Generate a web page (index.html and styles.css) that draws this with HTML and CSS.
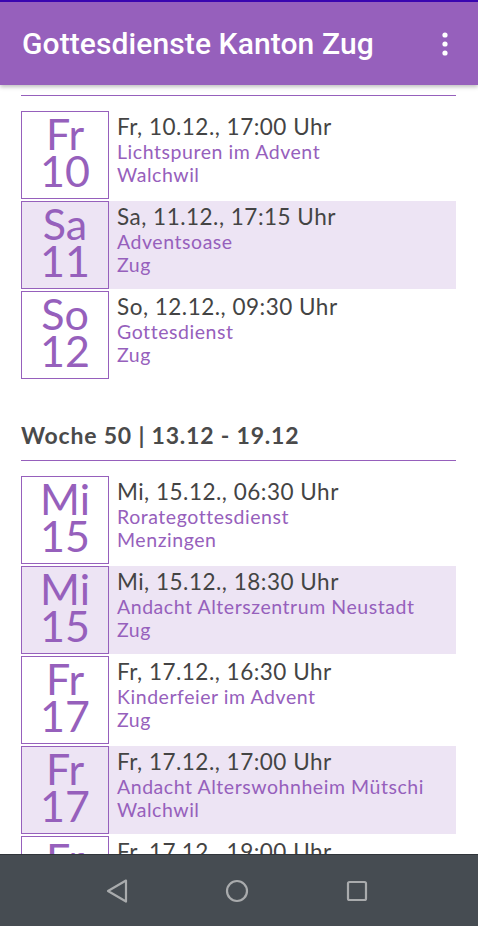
FILE: index.html
```html
<!DOCTYPE html>
<html lang="de">
<head>
<meta charset="utf-8">
<link rel="stylesheet" href="styles.css">
</head>
<body>
<div class="phone">
  <header class="appbar">
    <div class="statusline"></div>
    <div class="appbar-row">
      <h1 class="title">Gottesdienste Kanton Zug</h1>
      <svg class="menu" width="10" height="26" viewBox="0 0 10 26"><circle cx="5" cy="4" r="2.6" fill="#fff"/><circle cx="5" cy="13" r="2.6" fill="#fff"/><circle cx="5" cy="22" r="2.6" fill="#fff"/></svg>
    </div>
  </header>
  <main class="list">
    <div class="scroll">
      <section class="week">
        <h2 class="week-title">Woche 49 | 06.12 - 12.12</h2>
        <div class="event">
          <div class="day"><span>Fr</span><span>10</span></div>
          <div class="info"><div class="time">Fr, 10.12., 17:00 Uhr</div><div class="name">Lichtspuren im Advent</div><div class="place">Walchwil</div></div>
        </div>
        <div class="event shaded">
          <div class="day"><span>Sa</span><span>11</span></div>
          <div class="info"><div class="time">Sa, 11.12., 17:15 Uhr</div><div class="name">Adventsoase</div><div class="place">Zug</div></div>
        </div>
        <div class="event">
          <div class="day"><span>So</span><span>12</span></div>
          <div class="info"><div class="time">So, 12.12., 09:30 Uhr</div><div class="name">Gottesdienst</div><div class="place">Zug</div></div>
        </div>
      </section>
      <section class="week">
        <h2 class="week-title">Woche 50 | 13.12 - 19.12</h2>
        <div class="event">
          <div class="day"><span>Mi</span><span>15</span></div>
          <div class="info"><div class="time">Mi, 15.12., 06:30 Uhr</div><div class="name">Rorategottesdienst</div><div class="place">Menzingen</div></div>
        </div>
        <div class="event shaded">
          <div class="day"><span>Mi</span><span>15</span></div>
          <div class="info"><div class="time">Mi, 15.12., 18:30 Uhr</div><div class="name">Andacht Alterszentrum Neustadt</div><div class="place">Zug</div></div>
        </div>
        <div class="event">
          <div class="day"><span>Fr</span><span>17</span></div>
          <div class="info"><div class="time">Fr, 17.12., 16:30 Uhr</div><div class="name">Kinderfeier im Advent</div><div class="place">Zug</div></div>
        </div>
        <div class="event shaded">
          <div class="day"><span>Fr</span><span>17</span></div>
          <div class="info"><div class="time">Fr, 17.12., 17:00 Uhr</div><div class="name">Andacht Alterswohnheim Mütschi</div><div class="place">Walchwil</div></div>
        </div>
        <div class="event">
          <div class="day"><span>Fr</span><span>17</span></div>
          <div class="info"><div class="time">Fr, 17.12., 19:00 Uhr</div><div class="name">Adventskonzert</div><div class="place">Zug</div></div>
        </div>
      </section>
    </div>
  </main>
  <nav class="navbar">
    <svg width="24" height="26" viewBox="0 0 24 26"><path d="M21 2.5 L3 13 L21 23.5 Z" fill="none" stroke="#a9abad" stroke-width="2.2" stroke-linejoin="round"/></svg>
    <svg width="26" height="26" viewBox="0 0 26 26"><circle cx="13" cy="13" r="10" fill="none" stroke="#a9abad" stroke-width="2.2"/></svg>
    <svg width="24" height="24" viewBox="0 0 24 24"><rect x="3" y="3" width="18" height="18" rx="1.5" fill="none" stroke="#a9abad" stroke-width="2.2"/></svg>
  </nav>
</div>
</body>
</html>
```

FILE: styles.css
```css
* { box-sizing: border-box; }
html, body { margin: 0; padding: 0; }
body { width: 478px; height: 926px; overflow: hidden; background: #fff; font-family: Lato, "Open Sans", sans-serif; }
.phone { position: relative; width: 478px; height: 926px; display: flex; flex-direction: column; }
.appbar { position: absolute; top: 0; left: 0; right: 0; height: 85px; background: #9660bc; z-index: 2; box-shadow: 0 2px 4px rgba(0,0,0,0.25); }
.statusline { height: 2px; background: #3a06b0; }
.appbar-row { height: 83px; display: flex; align-items: center; justify-content: space-between; padding: 0 28px 0 22px; }
.title { margin: 0; color: #fff; font-family: Roboto, sans-serif; font-weight: 500; font-size: 30px; letter-spacing: 0.1px; }
.menu { display: block; }
.list { flex: 1; overflow: hidden; padding: 0 22px 0 21px; }
.scroll { margin-top: 55px; }
.week + .week { margin-top: 41px; }
.week-title { margin: 0; color: #4a4a4a; font-weight: 700; font-size: 23px; line-height: 30px; letter-spacing: 0.8px; padding-bottom: 10px; border-bottom: 1px solid #9660bc; margin-bottom: 15px; }
.event { display: flex; height: 88px; margin-bottom: 2px; }
.event.shaded { background: #ede4f4; }
.day { width: 88px; height: 88px; border: 1px solid #9660bc; display: flex; flex-direction: column; align-items: center; padding-top: 3px; color: #9660bc; font-size: 43px; line-height: 37px; flex: none; }
.info { padding: 3px 0 0 8px; white-space: nowrap; }
.time { color: #444; font-size: 22.5px; line-height: 26px; letter-spacing: 0.5px; }
.name, .place { color: #9660bc; font-size: 19.5px; line-height: 23px; letter-spacing: 0.55px; }
.navbar { position: relative; z-index: 3; height: 72px; flex: none; background: #464c52; border-top: 1px solid #30353a; display: flex; align-items: center; justify-content: center; gap: 95px; padding-right: 4px; }
.navbar svg { display: block; }
```
